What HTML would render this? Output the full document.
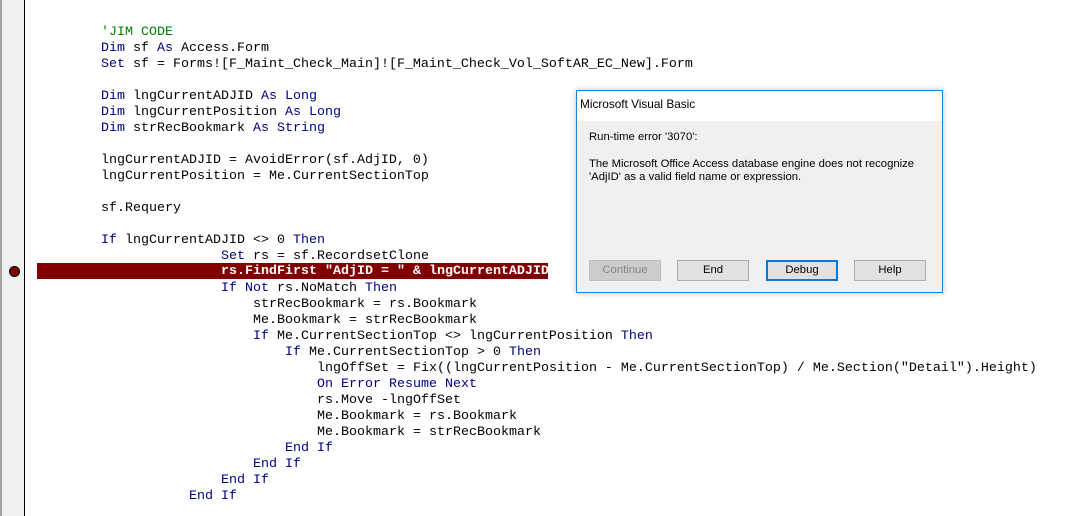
<!DOCTYPE html>
<html><head><style>
body{margin:0;width:1065px;height:516px;background:#fff;position:relative;overflow:hidden;font-family:"Liberation Mono",monospace}
.gut{position:absolute;left:0;top:0;width:25px;height:516px;background:#f0f0f0;border-left:2px solid #a0a0a0;box-sizing:border-box;border-right:1px solid #000}
.l{position:absolute;font-size:13.33px;line-height:16px;white-space:pre;color:#000;margin-top:2px}
.k{color:#000080}.c{color:#008000}
.hl{position:absolute;left:37px;top:263px;width:511px;height:16px;background:#800000}
.dot{position:absolute;left:9px;top:266px;width:9px;height:9px;border-radius:50%;background:#800000;border:1px solid #000}
.dlg{position:absolute;left:576px;top:90px;width:367px;height:203px;box-sizing:border-box;border:1px solid #1883d7;background:#f0f0f0;font-family:"Liberation Sans",sans-serif;font-size:11.3px;box-shadow:0 0 6px rgba(0,0,0,.25)}
.tt{height:30px;background:#fff;line-height:26px;padding-left:3px;font-size:11.8px}
.btn{position:absolute;top:169px;width:72px;height:21px;border:1px solid #adadad;background:#e1e1e1;box-sizing:border-box;text-align:center;line-height:19px}
</style></head><body>
<div class="gut"></div>
<div class="hl"></div><div class="dot"></div>
<div class="l" style="left:101px;top:23px"><span class="c">'JIM CODE</span></div>
<div class="l" style="left:101px;top:39px"><span class="k">Dim</span> sf <span class="k">As</span> Access.Form</div>
<div class="l" style="left:101px;top:55px"><span class="k">Set</span> sf = Forms![F_Maint_Check_Main]![F_Maint_Check_Vol_SoftAR_EC_New].Form</div>
<div class="l" style="left:101px;top:87px"><span class="k">Dim</span> lngCurrentADJID <span class="k">As Long</span></div>
<div class="l" style="left:101px;top:103px"><span class="k">Dim</span> lngCurrentPosition <span class="k">As Long</span></div>
<div class="l" style="left:101px;top:119px"><span class="k">Dim</span> strRecBookmark <span class="k">As String</span></div>
<div class="l" style="left:101px;top:151px">lngCurrentADJID = AvoidError(sf.AdjID, 0)</div>
<div class="l" style="left:101px;top:167px">lngCurrentPosition = Me.CurrentSectionTop</div>
<div class="l" style="left:101px;top:199px">sf.Requery</div>
<div class="l" style="left:101px;top:231px"><span class="k">If</span> lngCurrentADJID &lt;&gt; 0 <span class="k">Then</span></div>
<div class="l" style="left:221px;top:247px"><span class="k">Set</span> rs = sf.RecordsetClone</div>
<div class="l" style="left:221px;top:263px;margin-top:0;padding-top:1px;height:15px;color:#fff;font-weight:bold;width:327px;overflow:hidden">rs.FindFirst "AdjID = " &amp; lngCurrentADJID</div>
<div class="l" style="left:221px;top:279px"><span class="k">If Not</span> rs.NoMatch <span class="k">Then</span></div>
<div class="l" style="left:253px;top:295px">strRecBookmark = rs.Bookmark</div>
<div class="l" style="left:253px;top:311px">Me.Bookmark = strRecBookmark</div>
<div class="l" style="left:253px;top:327px"><span class="k">If</span> Me.CurrentSectionTop &lt;&gt; lngCurrentPosition <span class="k">Then</span></div>
<div class="l" style="left:285px;top:343px"><span class="k">If</span> Me.CurrentSectionTop &gt; 0 <span class="k">Then</span></div>
<div class="l" style="left:317px;top:359px">lngOffSet = Fix((lngCurrentPosition - Me.CurrentSectionTop) / Me.Section("Detail").Height)</div>
<div class="l" style="left:317px;top:375px"><span class="k">On Error Resume Next</span></div>
<div class="l" style="left:317px;top:391px">rs.Move -lngOffSet</div>
<div class="l" style="left:317px;top:407px">Me.Bookmark = rs.Bookmark</div>
<div class="l" style="left:317px;top:423px">Me.Bookmark = strRecBookmark</div>
<div class="l" style="left:285px;top:439px"><span class="k">End If</span></div>
<div class="l" style="left:253px;top:455px"><span class="k">End If</span></div>
<div class="l" style="left:221px;top:471px"><span class="k">End If</span></div>
<div class="l" style="left:189px;top:487px"><span class="k">End If</span></div>
<div class="dlg">
<div class="tt">Microsoft Visual Basic</div>
<div style="position:absolute;left:12px;top:40px">Run-time error '3070':</div>
<div style="position:absolute;left:12px;top:67px;line-height:13px">The Microsoft Office Access database engine does not recognize<br>'AdjID' as a valid field name or expression.</div>
<div class="btn" style="left:12px;background:#cccccc;border-color:#bfbfbf;color:#838383">Continue</div>
<div class="btn" style="left:100px">End</div>
<div class="btn" style="left:189px;border:2px solid #0078d7;line-height:17px">Debug</div>
<div class="btn" style="left:277px">Help</div>
</div>
</body></html>
